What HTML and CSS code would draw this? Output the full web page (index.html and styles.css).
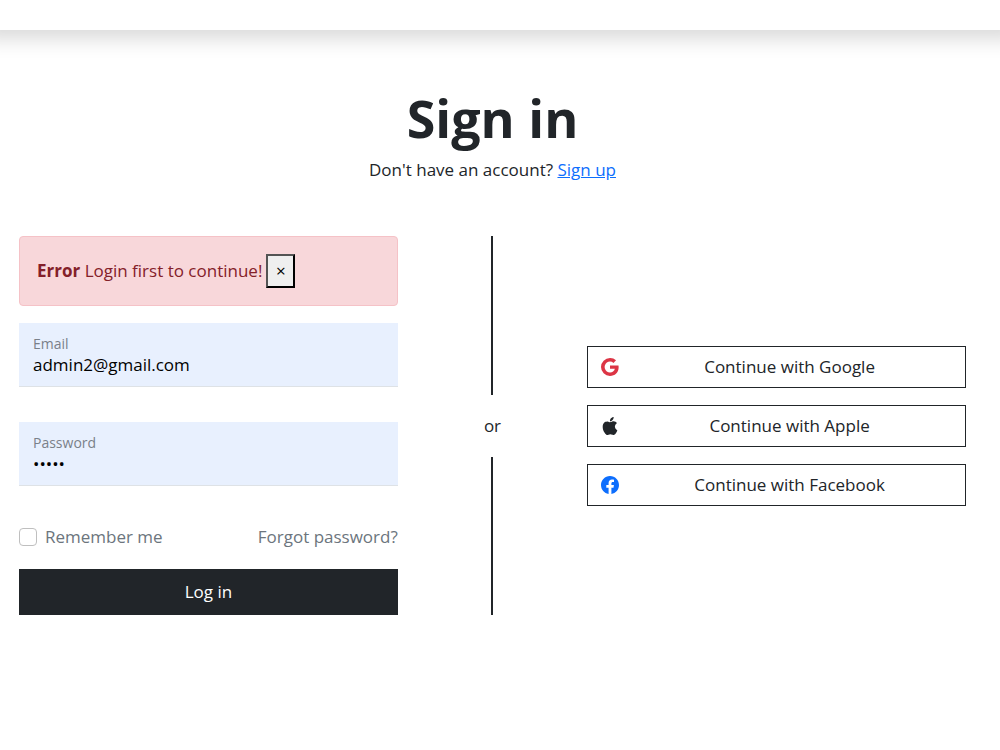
FILE: index.html
```html
<!DOCTYPE html>
<html lang="en">
<head>
<meta charset="utf-8">
<meta name="viewport" content="width=device-width, initial-scale=1">
<title>Sign in</title>
<link rel="stylesheet" href="styles.css">
</head>
<body>
<header class="topbar"></header>
<main class="page">
  <div class="intro">
    <h1 class="title">Sign in</h1>
    <p class="subtitle">Don't have an account? <a class="link" href="#signup">Sign up</a></p>
  </div>
  <div class="columns">
    <form class="form">
      <div class="alert" role="alert">
        <span><strong>Error</strong> Login first to continue!</span>
        <button class="alert-close" type="button" aria-label="Close">×</button>
      </div>
      <div class="field">
        <label class="field-label" for="email">Email</label>
        <input class="field-input" type="email" id="email" value="admin2@gmail.com">
      </div>
      <div class="field">
        <label class="field-label" for="password">Password</label>
        <input class="field-input" type="password" id="password" value="admin">
      </div>
      <div class="options">
        <label class="remember" for="remember"><input class="check" type="checkbox" id="remember">Remember me</label>
        <a class="forgot" href="#forgot">Forgot password?</a>
      </div>
      <button class="submit" type="submit">Log in</button>
    </form>
    <div class="divider"><span class="line"></span><span>or</span><span class="line"></span></div>
    <div class="social">
      <button class="social-button" type="button">
        <svg class="icon google" viewBox="0 0 16 16" aria-hidden="true"><path d="M15.545 6.558a9.42 9.42 0 0 1 .139 1.626c0 2.434-.87 4.492-2.384 5.885h.002C11.978 15.292 10.158 16 8 16A8 8 0 1 1 8 0a7.689 7.689 0 0 1 5.352 2.082l-2.284 2.284A4.347 4.347 0 0 0 8 3.166c-2.087 0-3.86 1.408-4.492 3.304a4.792 4.792 0 0 0 0 3.063h.003c.635 1.893 2.405 3.301 4.492 3.301 1.078 0 2.004-.276 2.722-.764h-.003a3.702 3.702 0 0 0 1.599-2.431H8v-3.08h7.545z"/></svg>
        <span class="social-text">Continue with Google</span>
      </button>
      <button class="social-button" type="button">
        <svg class="icon" viewBox="0 0 16 16" aria-hidden="true"><path d="M11.182.008C11.148-.03 9.923.023 8.857 1.18c-1.066 1.156-.902 2.482-.878 2.516.024.034 1.52.087 2.475-1.258.955-1.345.762-2.391.728-2.43zm3.314 11.733c-.048-.096-2.325-1.234-2.113-3.422.212-2.189 1.675-2.789 1.698-2.854.023-.065-.597-.79-1.254-1.157a3.692 3.692 0 0 0-1.563-.434c-.108-.003-.483-.095-1.254.116-.508.139-1.653.589-1.968.607-.316.018-1.256-.522-2.267-.665-.647-.125-1.333.131-1.824.328-.49.196-1.422.754-2.074 2.237-.652 1.482-.311 3.83-.067 4.56.244.729.625 1.924 1.273 2.796.576.984 1.34 1.667 1.659 1.899.319.232 1.219.386 1.843.067.502-.308 1.408-.485 1.766-.472.357.013 1.061.154 1.782.539.571.197 1.111.115 1.652-.105.541-.221 1.324-1.059 2.238-2.758.347-.79.505-1.217.473-1.282z"/></svg>
        <span class="social-text">Continue with Apple</span>
      </button>
      <button class="social-button" type="button">
        <svg class="icon facebook" viewBox="0 0 16 16" aria-hidden="true"><path d="M16 8.049c0-4.446-3.582-8.05-8-8.05C3.58 0-.002 3.603-.002 8.05c0 4.017 2.926 7.347 6.75 7.951v-5.625h-2.03V8.05H6.75V6.275c0-2.017 1.195-3.131 3.022-3.131.876 0 1.791.157 1.791.157v1.98h-1.009c-.993 0-1.303.621-1.303 1.258v1.51h2.218l-.354 2.326H9.25V16c3.824-.604 6.75-3.934 6.75-7.951z"/></svg>
        <span class="social-text">Continue with Facebook</span>
      </button>
    </div>
  </div>
</main>
</body>
</html>
```
FILE: styles.css
```css
* {
  box-sizing: border-box;
}

body {
  margin: 0;
  background: #fff;
  color: #212529;
  font-family: "Open Sans", "Noto Sans", sans-serif;
  font-size: 17px;
  line-height: 26px;
}

button,
input {
  font: inherit;
  color: inherit;
  border-radius: 0;
}

.topbar {
  height: 30px;
  background: #fff;
  box-shadow: 0 -9px 19px 18px rgba(0, 0, 0, 0.15);
}

.page {
  padding: 56px 34px 56px 19px;
}

.intro {
  text-align: center;
  margin-bottom: 53px;
}

.title {
  margin: 0 0 7px;
  font-size: 52px;
  line-height: 64px;
  font-weight: 700;
}

.subtitle {
  margin: 0;
}

.link {
  color: #0d6efd;
}

.columns {
  display: grid;
  grid-template-columns: 2fr 1fr 2fr;
}

.form {
  display: flex;
  flex-direction: column;
}

.alert {
  display: flex;
  align-items: center;
  gap: 4px;
  padding: 17px;
  margin-bottom: 17px;
  border: 1px solid #f5c2c7;
  border-radius: 4px;
  background: #f8d7da;
  color: #842029;
}

.alert-close {
  width: 29px;
  height: 34px;
  padding: 0;
  border: 2px outset #000;
  background: #efefef;
  color: #000;
}

.field {
  display: flex;
  flex-direction: column;
  height: 64px;
  padding: 9px 14px 8px;
  margin-bottom: 35px;
  border-bottom: 1px solid #dee2e6;
  background: #e8f0fe;
}

.field-label {
  color: #7a8089;
  font-size: 14px;
  line-height: 23px;
}

.field-input {
  width: 100%;
  height: 20px;
  padding: 0;
  border: 0;
  outline: 0;
  background: transparent;
  color: #000;
}

.options {
  display: flex;
  align-items: center;
  justify-content: space-between;
  margin: 3px 0 19px;
  color: #6c757d;
}

.remember {
  display: flex;
  align-items: center;
  gap: 8px;
}

.check {
  appearance: none;
  width: 18px;
  height: 18px;
  margin: 0;
  border: 1px solid #bfbfbf;
  border-radius: 4px;
  background: #fff;
}

.check:checked {
  background: #0d6efd;
}

.forgot {
  color: inherit;
  text-decoration: none;
}

.submit {
  padding: 10px;
  border: 0;
  background: #212529;
  color: #fff;
}

.divider {
  display: flex;
  flex-direction: column;
  align-items: center;
  gap: 18px;
}

.line {
  flex: 1;
  width: 2px;
  background: #212529;
}

.social {
  display: flex;
  flex-direction: column;
  justify-content: center;
  gap: 17px;
}

.social-button {
  display: flex;
  align-items: center;
  height: 42px;
  padding: 0 5px 0 13px;
  border: 1px solid #212529;
  background: #fff;
}

.icon {
  width: 18px;
  height: 18px;
  fill: #212529;
}

.google {
  fill: #dc3545;
}

.facebook {
  fill: #0d6efd;
}

.social-text {
  flex: 1;
  text-align: center;
}
```
